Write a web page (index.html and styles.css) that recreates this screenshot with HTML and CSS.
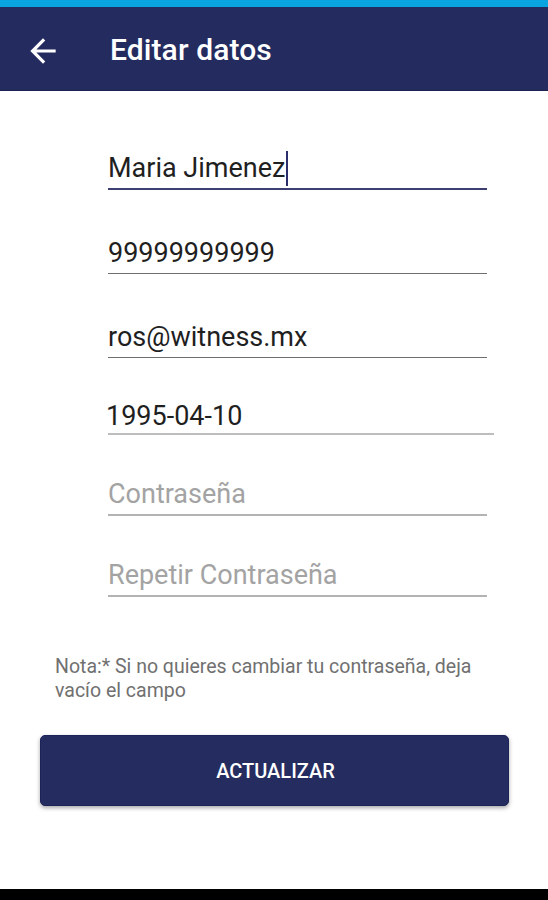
FILE: index.html
```html
<!DOCTYPE html>
<html lang="es">
<head>
<meta charset="utf-8">
<title>Editar datos</title>
<link rel="stylesheet" href="styles.css">
</head>
<body>
<div class="page">
  <div class="status"></div>
  <header class="appbar">
    <svg class="back" viewBox="0 0 24 24" width="38" height="38" aria-hidden="true">
      <path d="M20 11H7.83l5.59-5.59L12 4l-8 8 8 8 1.41-1.41L7.83 13H20v-2z" fill="#ffffff"/>
    </svg>
    <h1 class="title">Editar datos</h1>
  </header>
  <main class="content">
    <div class="fields">
      <div class="field focused first"><span class="value">Maria Jimenez</span><span class="cursor"></span></div>
      <div class="field"><span class="value">99999999999</span></div>
      <div class="field"><span class="value">ros@witness.mx</span></div>
      <div class="field date"><span class="value">1995-04-10</span></div>
      <div class="field pwd"><span class="placeholder">Contraseña</span></div>
      <div class="field pwd"><span class="placeholder">Repetir Contraseña</span></div>
    </div>
    <p class="note">Nota:* Si no quieres cambiar tu contraseña, deja vacío el campo</p>
    <button class="btn" type="button">ACTUALIZAR</button>
  </main>
  <div class="navbar"></div>
</div>
</body>
</html>
```

FILE: styles.css
```css
html, body {
  margin: 0;
  padding: 0;
  background: #ffffff;
}

body {
  font-family: Roboto, "Liberation Sans", Arial, sans-serif;
}

.page {
  height: 900px;
  display: flex;
  flex-direction: column;
}

.status {
  height: 7px;
  background: #0aa4e0;
}

.appbar {
  height: 79px;
  padding-top: 4px;
  background: #242c5f;
  border-bottom: 1px solid #1b2150;
  display: flex;
  align-items: center;
  padding-left: 24px;
}

.back {
  display: block;
  flex: none;
}

.title {
  margin: 0 0 0 48px;
  color: #ffffff;
  font-size: 30px;
  font-weight: 500;
  letter-spacing: 0.1px;
  line-height: 1;
  padding-bottom: 1px;
}

.content {
  flex: 1;
  display: flex;
  flex-direction: column;
}

.fields {
  display: flex;
  flex-direction: column;
  padding: 0 61px 0 108px;
}

.field {
  height: 40px;
  display: flex;
  align-items: center;
  font-size: 27px;
  color: #1f1f1f;
  border-bottom: 1px solid #6f6f6f;
  margin-top: 43px;
}

.field.focused {
  border-bottom: 2px solid #3c3f70;
  margin-top: 57px;
}

.field.first .value {
  margin-top: 1px;
}

.field.date {
  margin-top: 39px;
  height: 36px;
  margin-right: -7px;
  border-bottom: 2px solid #bdbdbd;
}

.field.date .value {
  margin-left: -2px;
  margin-top: 2px;
}

.field.pwd {
  margin-top: 41px;
  height: 38px;
  border-bottom: 2px solid #b3b3b3;
}

.field.pwd .placeholder {
  margin-bottom: 2px;
}

.value {
  line-height: 1;
}

.placeholder {
  color: #a3a3a3;
  line-height: 1;
}

.cursor {
  display: inline-block;
  width: 2px;
  height: 35px;
  background: #2b2e6b;
  margin-left: 1px;
}

.note {
  margin: 58px 0 0 55px;
  width: 440px;
  font-size: 19.5px;
  line-height: 24px;
  color: #707070;
}

.btn {
  margin: 32px 0 0 40px;
  width: 469px;
  height: 71px;
  background: #252d60;
  border: 1px solid #1d2358;
  border-radius: 5px;
  box-shadow: 0 2px 4px rgba(0, 0, 0, 0.35);
  color: #ffffff;
  font-family: Roboto, "Liberation Sans", Arial, sans-serif;
  font-size: 20px;
  font-weight: 500;
  padding: 0 0 0 2px;
  line-height: 1;
}

.navbar {
  height: 11px;
  background: #000000;
}
```
